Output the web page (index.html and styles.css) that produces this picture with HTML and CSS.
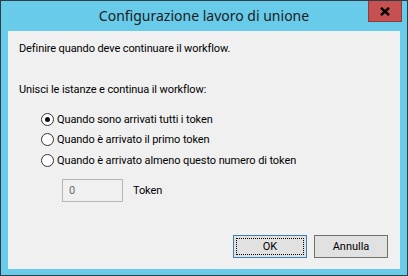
FILE: index.html
```html
<!DOCTYPE html>
<html lang="it">
<head>
<meta charset="utf-8">
<title>Configurazione lavoro di unione</title>
<link rel="stylesheet" href="styles.css">
</head>
<body>
<div class="window">
  <div class="titlebar">
    <span class="title">Configurazione lavoro di unione</span>
    <button class="close" aria-label="Chiudi">
      <svg width="10" height="9" viewBox="0 0 10 9"><path d="M1 0.8 L9 8.2 M9 0.8 L1 8.2" stroke="#000" stroke-width="2.4" fill="none"/></svg>
    </button>
  </div>
  <div class="client">
    <p class="line intro">Definire quando deve continuare il workflow.</p>
    <p class="line label">Unisci le istanze e continua il workflow:</p>
    <div class="options">
      <label class="opt"><input type="radio" name="mode" checked><span>Quando sono arrivati tutti i token</span></label>
      <label class="opt"><input type="radio" name="mode"><span>Quando è arrivato il primo token</span></label>
      <label class="opt"><input type="radio" name="mode"><span>Quando è arrivato almeno questo numero di token</span></label>
    </div>
    <div class="count">
      <input class="num" type="text" value="0" disabled>
      <span class="unit">Token</span>
    </div>
    <div class="actions">
      <button class="btn default"><span class="focus">OK</span></button>
      <button class="btn">Annulla</button>
    </div>
  </div>
</div>
</body>
</html>
```
FILE: styles.css
```css
* { box-sizing: border-box; }
html, body { margin: 0; padding: 0; }
body {
  font-family: "Roboto", "Liberation Sans", sans-serif;
  font-size: 11px;
  letter-spacing: -0.1px;
  color: #000;
  background: #68cbea;
}
.window {
  width: 408px;
  height: 276px;
  border: 1px solid #2f3e44;
  background: #68cbea;
  padding: 0 7px 6px;
  display: flex;
  flex-direction: column;
}
.titlebar {
  position: relative;
  height: 30px;
  margin: 0 -7px;
  display: flex;
  align-items: center;
  justify-content: center;
  padding-bottom: 1px;
}
.title {
  font-family: "Noto Sans", sans-serif;
  font-size: 14px;
  letter-spacing: 0;
  color: #1c1c1c;
}
.close {
  position: absolute;
  top: 0;
  right: 5px;
  width: 34px;
  height: 21px;
  margin: 0;
  padding: 0;
  border: 1px solid #8e3b3b;
  border-top: none;
  background: #c75050;
  display: flex;
  align-items: center;
  justify-content: center;
}
.client {
  flex: 1;
  background: #f0f0f0;
  padding: 10px 11px 11px;
  display: flex;
  flex-direction: column;
}
.line {
  margin: 0;
  line-height: 16px;
}
.label { margin-top: 25px; }
.options {
  margin-top: 11px;
  padding-left: 22px;
  display: flex;
  flex-direction: column;
}
.opt {
  height: 20.5px;
  display: flex;
  align-items: center;
}
.opt input {
  appearance: none;
  -webkit-appearance: none;
  width: 13px;
  height: 13px;
  margin: 0 3px 0 0;
  border: 1px solid #333;
  border-radius: 50%;
  background: #fff;
  display: grid;
  place-items: center;
}
.opt input:checked::after {
  content: "";
  width: 5px;
  height: 5px;
  border-radius: 50%;
  background: #111;
}
.count {
  margin-top: 8px;
  padding-left: 43px;
  display: flex;
  align-items: center;
}
.num {
  width: 61px;
  height: 23px;
  margin: 0;
  padding: 0 6px;
  border: 1px solid #b5b5b5;
  background: #f0f0f0;
  color: #6d6d6d;
  font: inherit;
}
.unit { margin-left: 10px; }
.actions {
  margin-top: auto;
  margin-right: 1px;
  display: flex;
  justify-content: flex-end;
  gap: 7px;
}
.btn {
  width: 74px;
  height: 23px;
  margin: 0;
  padding: 0;
  border: 1px solid #707070;
  background: #e1e1e1;
  font: inherit;
  color: #000;
  display: flex;
  align-items: center;
  justify-content: center;
}
.btn.default {
  border-color: #3c7fb1;
  padding: 2px;
}
.focus {
  width: 100%;
  height: 100%;
  border: 1px dotted #000;
  display: flex;
  align-items: center;
  justify-content: center;
}
```
